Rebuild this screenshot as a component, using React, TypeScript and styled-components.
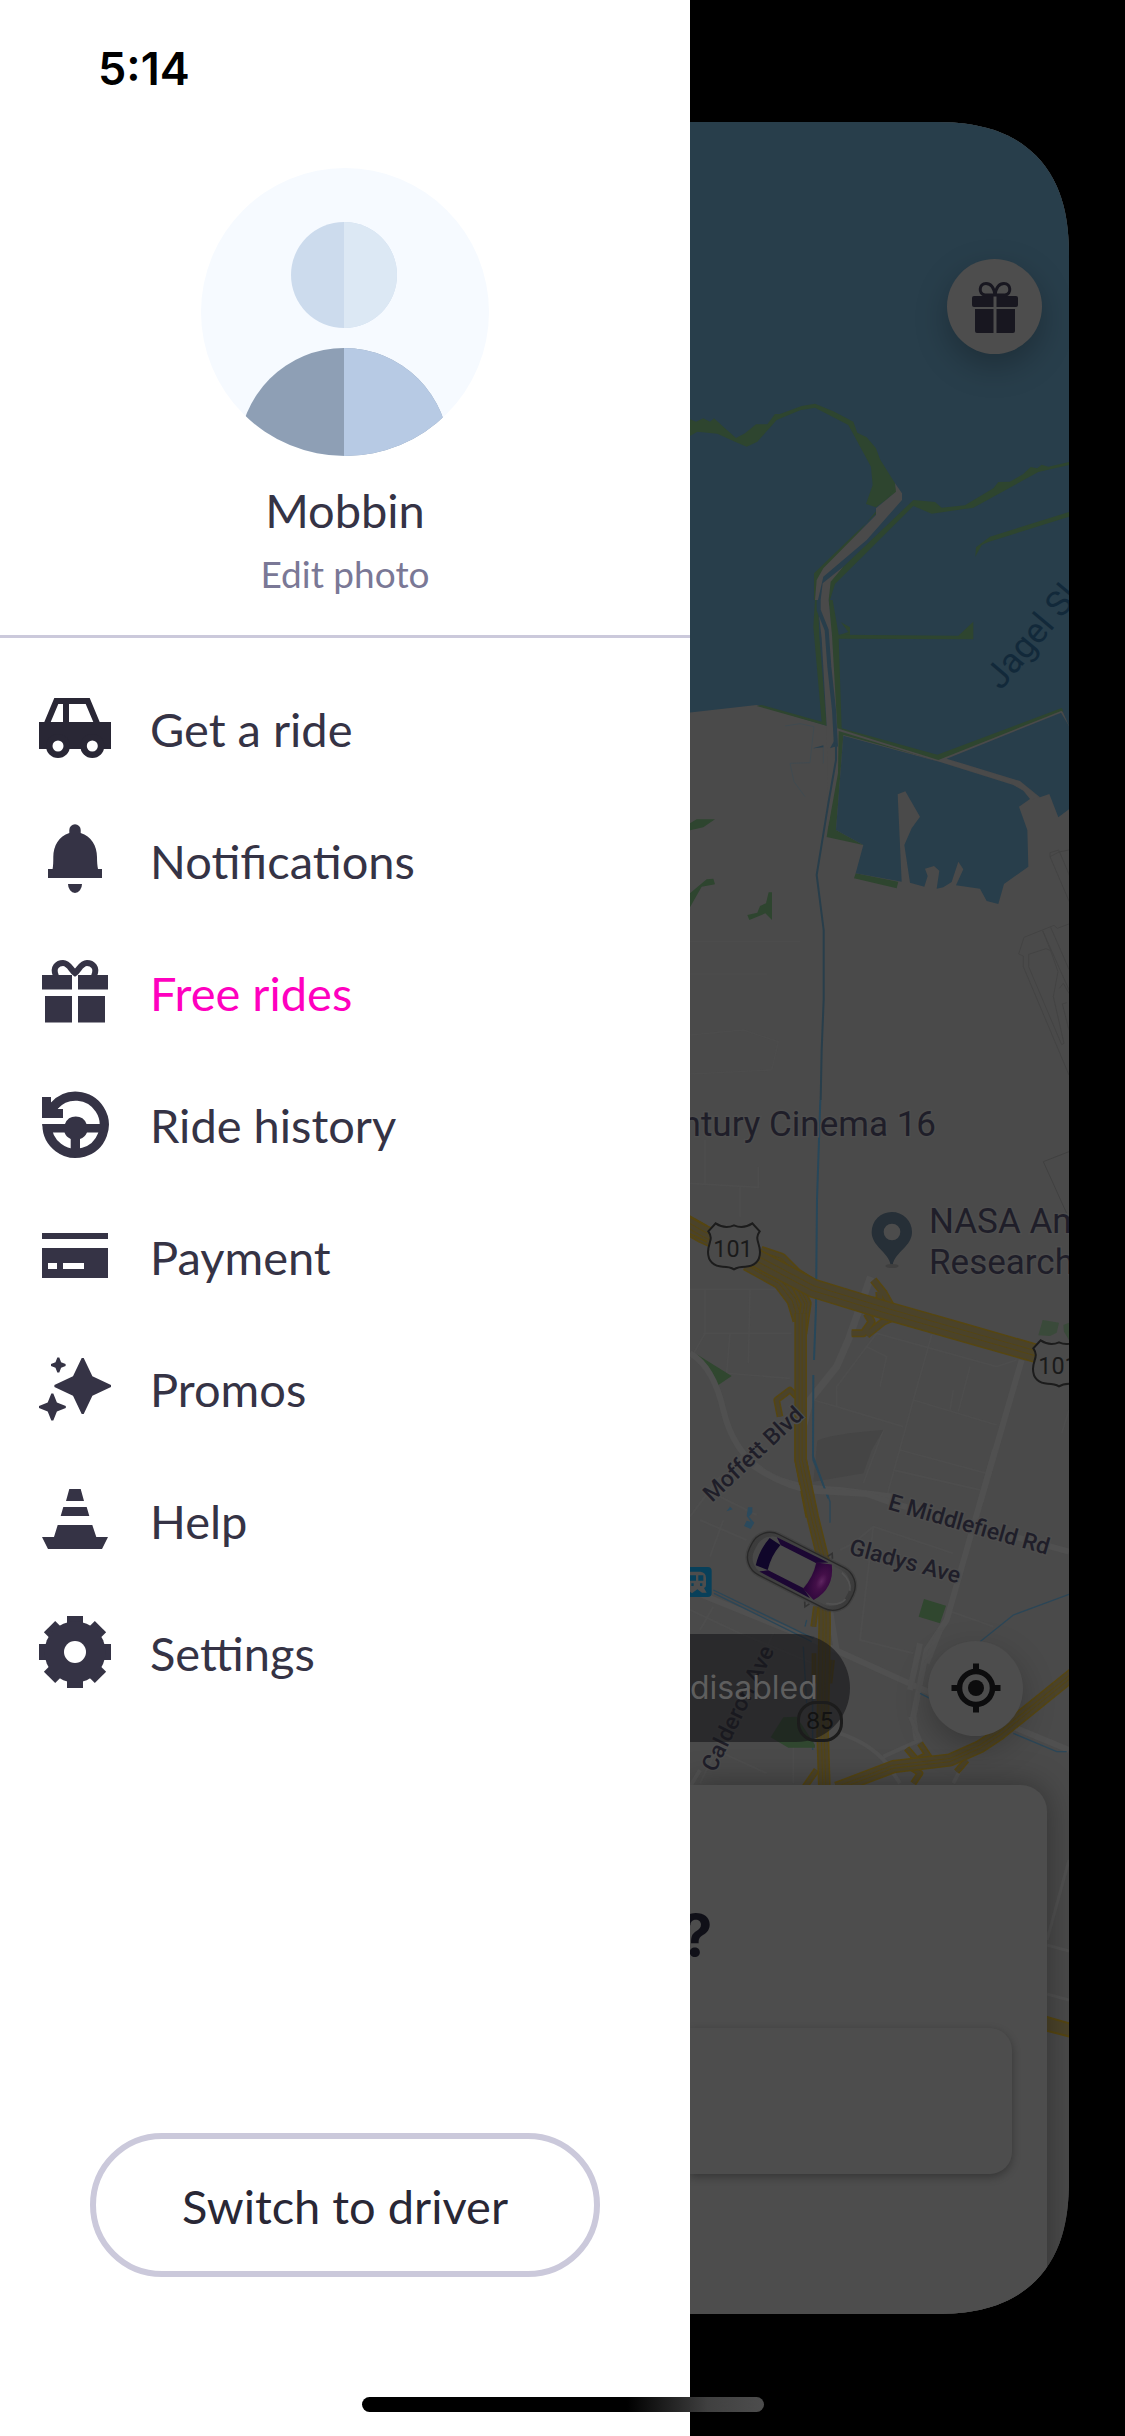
import React from "react";
import styled, { createGlobalStyle } from "styled-components";

const INK = "#353345";
const LINE = "#cbc9db";

const GlobalStyle = createGlobalStyle`
  *, *::before, *::after { box-sizing: border-box; }
  body { margin: 0; background: #000; }
  ul { list-style: none; margin: 0; padding: 0; }
  h1, h2, p { margin: 0; font-weight: 400; }
  button { font: inherit; border: 0; padding: 0; cursor: pointer; }
`;

const Screen = styled.main`
  position: relative;
  display: grid;
  grid-template-columns: minmax(0, 690fr) minmax(0, 435fr);
  min-height: 100vh;
  background: #000;
  font-family: Lato, "Open Sans", sans-serif;
`;

/* ---------- drawer ---------- */

const Drawer = styled.aside`
  display: flex;
  flex-direction: column;
  background: #fff;
  color: ${INK};
`;

const StatusBar = styled.div`
  height: 168px;
  padding: 42px 98px 0;
  font: 600 45px/54px Inter, sans-serif;
  color: #000;
`;

const Profile = styled.header`
  display: flex;
  flex-direction: column;
  align-items: center;
  padding-bottom: 36px;
  border-bottom: 3px solid ${LINE};
`;

const Avatar = styled.svg`
  width: 288px;
  height: 288px;
`;

const UserName = styled.h1`
  margin-top: 24px;
  font-size: 47px;
  line-height: 60px;
`;

const EditPhoto = styled.button`
  margin-top: 8px;
  background: none;
  color: #7a7896;
  font-size: 37px;
  line-height: 51px;
`;

const Menu = styled.nav`
  flex: 1;
  padding: 24px 0;
`;

const MenuLink = styled.a<{ $highlight?: boolean }>`
  display: flex;
  align-items: center;
  gap: 39px;
  height: 132px;
  padding: 0 39px;
  color: ${(p) => (p.$highlight ? "#ff00bf" : INK)};
  font-size: 47px;
  line-height: 60px;
  text-decoration: none;
`;

const MenuLabel = styled.span`
  padding-top: 2px;
`;

const MenuIcon = styled.svg`
  flex: none;
  width: 72px;
  height: 72px;
  fill: ${INK};
`;

const DrawerFooter = styled.footer`
  padding: 0 90px 159px;
`;

const SwitchButton = styled.button`
  width: 100%;
  height: 144px;
  padding-top: 2px;
  border: 6px solid ${LINE};
  border-radius: 72px;
  background: #fff;
  color: #292735;
  font-size: 47px;
  line-height: 60px;
`;

/* ---------- dimmed app behind the drawer ---------- */

const AppPreview = styled.section`
  position: relative;
  display: flex;
  flex-direction: column;
  margin: 122px 56px 122px 0;
  overflow: hidden;
  background: #4a4a4a;
  border-radius: 0 104px 104px 0;
  @supports (corner-shape: superellipse(1.3)) {
    border-radius: 0 136px 136px 0;
    corner-shape: superellipse(1.3);
  }
`;

const MapCanvas = styled.svg`
  position: absolute;
  inset: 0;
  width: 100%;
  height: 100%;
  font-family: Roboto, Inter, sans-serif;
`;

const Overlay = styled.div`
  position: relative;
  flex: 1;
  display: flex;
  flex-direction: column;
`;

const RoundButton = styled.button`
  display: grid;
  place-items: center;
  flex: none;
  width: 95px;
  height: 95px;
  border-radius: 50%;
  background: #4d4d4d;
  box-shadow: 0 12px 32px rgba(0, 0, 0, 0.25);
  svg { width: 52px; height: 52px; }
`;

const TopActions = styled.div`
  flex: 1;
  display: flex;
  justify-content: flex-end;
  align-items: flex-start;
  padding: 137px 27px 0 0;
`;

const MapActions = styled.div`
  display: flex;
  justify-content: space-between;
  align-items: center;
  height: 108px;
  margin-bottom: 43px;
  padding-right: 46px;
`;

const Notice = styled.p`
  height: 108px;
  padding-right: 32px;
  border-radius: 0 54px 54px 0;
  background: rgba(22, 22, 26, 0.62);
  color: #5e5e5e;
  font: 400 32px/108px Inter, sans-serif;
`;

const Sheet = styled.div`
  margin-right: 22px;
  padding: 118px 35px 140px 0;
  border-radius: 0 26px 0 0;
  background: #4d4d4d;
  box-shadow: 0 0 32px rgba(0, 0, 0, 0.35);
`;

const SheetTitle = styled.h2`
  color: #101018;
  font: 700 58px/64px Inter, sans-serif;
  margin: 0 0 61px -10px;
`;

const SearchField = styled.input`
  display: block;
  width: 100%;
  height: 146px;
  border: 0;
  border-radius: 0 22px 22px 0;
  background: #4d4d4d;
  box-shadow: 0 3px 9px rgba(0, 0, 0, 0.3);
`;

const HomeIndicator = styled.div`
  position: absolute;
  left: 50%;
  bottom: 24px;
  width: 402px;
  height: 15px;
  margin-left: -201px;
  border-radius: 8px;
  background: linear-gradient(90deg, #000 66%, #404040 86%, #4d4d4d);
`;

/* ---------- icons ---------- */

const star = (cx: number, cy: number, rx: number, ry: number, t: number) =>
  `M${cx - 1} ${cy - ry}h2L${cx + t} ${cy - t}L${cx + rx} ${cy - 1}v2L${cx + t} ${cy + t}L${cx + 1} ${cy + ry}h-2L${cx - t} ${cy + t}L${cx - rx} ${cy + 1}v-2L${cx - t} ${cy - t}Z`;

const icons = {
  car: (
    <>
      <path fill="#292735" fillRule="evenodd" d="M15.3 6H50.7L60.7 30H72V57H0V30H5.3ZM19.3 12L11.7 30H24V12ZM30 12V30H54.3L46.7 12Z" />
      <circle cx="19" cy="54" r="12" fill="#292735" />
      <circle cx="53.3" cy="54" r="12" fill="#292735" />
      <circle cx="19" cy="54" r="5.5" fill="#fff" />
      <circle cx="53.3" cy="54" r="5.5" fill="#fff" />
    </>
  ),
  bell: <path d="M30.3 6a5.7 5.7 0 0 1 11.4 0V9C52 12 58 22 58 33C58 38 58.4 42 59 45H63V54H9V45H13.6C14.2 42 14.3 38 14.3 33C14.3 22 20 12 30.3 9ZM29 60H43a7 9 0 0 1-14 0Z" />,
  gift: (
    <>
      <path d="M3 19H33V33.5H3ZM39 19H69V33.5H39ZM6 40H33V66.5H6ZM39 40H66V66.5H39Z" />
      <path d="M17 20C13 11 19 7 24 7C30 7 32 14 36 17C40 14 42 7 48 7C53 7 59 11 55 20" fill="none" stroke={INK} strokeWidth="6" />
    </>
  ),
  history: (
    <>
      <path d="M15 18A28.6 28.6 0 1 1 8 36.5" fill="none" stroke={INK} strokeWidth="9.2" />
      <path d="M3 9H12V15L17 12L20 18L18.5 21H24V30H3ZM3 36H26A11.5 11.5 0 0 1 47.5 36H66V44.5H48A12 12 0 0 1 41 51V63H31.7V51A12 12 0 0 1 25.5 44.5H6Z" />
    </>
  ),
  card: <path fillRule="evenodd" d="M3 13H69V19H3ZM3 28H69V58H3ZM9 43V49H18V43ZM24 43V49H45V43Z" />,
  sparkle: (
    <path d={star(43.7, 34, 28.3, 28, 9.7) + star(19.3, 13, 7.3, 7.5, 2.8) + star(13.3, 55, 13.5, 13.5, 4.6)} />
  ),
  cone: <path d="M30.3 5H41.7L45 17H27ZM24.3 23H47.7L50.3 32H21.7ZM18.7 41H53.3L57.3 53H69L63 65H9L3 53H15Z" />,
  gear: (
    <>
      {[0, 45, 90, 135].map((a) => (
        <rect key={a} x="28" y="0" width="16" height="72" transform={`rotate(${a} 36 36)`} />
      ))}
      <circle cx="36" cy="36" r="30.5" />
      <circle cx="36" cy="36" r="11" fill="#fff" />
    </>
  ),
};

const menu: { label: string; icon: keyof typeof icons; highlight?: boolean }[] = [
  { label: "Get a ride", icon: "car" },
  { label: "Notifications", icon: "bell" },
  { label: "Free rides", icon: "gift", highlight: true },
  { label: "Ride history", icon: "history" },
  { label: "Payment", icon: "card" },
  { label: "Promos", icon: "sparkle" },
  { label: "Help", icon: "cone" },
  { label: "Settings", icon: "gear" },
];

/* ---------- map ---------- */

const WATER = "#283e4b";
const PARK = "#2e452f";
const LAND = "#4a4a4a";
const ROAD = "#505050";
const STREAM = "#2b4657";
const GOLD = "#564611";
const GOLD_FILL = "#4b432a";

const Highway = ({ d, w = 34 }: { d: string; w?: number }) => (
  <g fill="none" strokeLinejoin="round">
    <path d={d} stroke={GOLD} strokeWidth={w} />
    <path d={d} stroke={GOLD_FILL} strokeWidth={w - 9} />
    {w > 30 && (
      <>
        <path d={d} stroke={GOLD} strokeWidth={w * 0.3} />
        <path d={d} stroke={GOLD_FILL} strokeWidth={w * 0.3 - 5} />
      </>
    )}
  </g>
);

const UsShield = ({ x, y }: { x: number; y: number }) => (
  <g transform={`translate(${x} ${y})`}>
    <path
      d="M-55 -72Q-28 -54 0 -66Q28 -54 55 -72L77 -48C60 -24 78 -14 78 14C78 42 60 58 34 58Q12 58 0 66Q-12 58 -34 58C-60 58 -78 42 -78 14C-78 -14 -60 -24 -77 -48Z"
      fill="#4a4a4a"
      stroke="#1c1c1c"
      strokeWidth="6"
    />
    <text x="-3" y="30" textAnchor="middle" fontSize="70" fill="#1a1a1a">101</text>
  </g>
);

const Map = () => (
  <MapCanvas viewBox="690 122 379 2192" preserveAspectRatio="xMinYMin slice" role="img" aria-label="Map">
    <defs>
      <linearGradient id="hood" x1="0" x2="1">
        <stop offset="0" stopColor="#3c3c3c" />
        <stop offset="0.7" stopColor="#474747" />
        <stop offset="1" stopColor="#3a3a3a" />
      </linearGradient>
      <radialGradient id="glass" cx="0.62" cy="0.5" r="0.6">
        <stop offset="0" stopColor="#5e2560" />
        <stop offset="0.35" stopColor="#430f48" />
        <stop offset="1" stopColor="#2a0639" />
      </radialGradient>
    </defs>
    <rect x="690" y="122" width="379" height="2192" fill={LAND} />

    {/* bay shore */}
    <g transform="translate(680 100) scale(0.33333)">
      <path fill={WATER} d="M0 0H1200V1510H0Z" />
      <g fill={PARK}>
        <path d="M30 958L48 965L70 955L90 965L102 955L130 980L168 1014L195 1000L228 973H262L285 942H300L365 918L405 911L460 934L520 965L532 998L560 1012L588 1045L600 1078L645 1150L650 1175L588 1222L558 1212L578 1155L573 1100L505 975L405 923L360 931L290 960L232 1025L200 1040L165 1025L112 1001L52 995L30 1008Z" />
        <path d="M450 1500L465 1452L700 1218L755 1241L880 1223L1075 1116L1167 1095V1086L1105 1100L1085 1094L1072 1105L1052 1101L1030 1122L990 1145L955 1146L940 1165L855 1216L785 1223L765 1206L700 1200L490 1400L440 1452V1500Z" />
        <path d="M886 1370L888 1342L930 1310L1167 1236V1250L925 1326L905 1335Z" />
        <path d="M402 1500V1420L500 1325L590 1240L640 1170L420 1440L410 1500Z" />
      </g>
      <path fill={LAND} d="M645 1150L666 1180V1200L560 1320L430 1430L414 1500H405L410 1440L430 1405L588 1245V1225L648 1175ZM422 1500L428 1450L490 1400L452 1445L446 1500Z" />
    </g>
    <g transform="translate(680 600) scale(0.33333)">
      <path fill={WATER} d="M0 0H1200V378H1167L1145 328L775 470L475 385L440 377L230 315L0 341Z" />
      <g fill={PARK}>
        <path d="M405 0H414L418 110L440 377L230 318L245 315L425 365L400 80Z" />
        <path d="M446 0H458L476 104L835 107L880 65V118L476 116L485 385L772 464L1145 324L1150 334L775 482L490 405L468 690L550 735L440 711L472 500L470 385L455 110Z" />
        <path d="M482 66L510 82V104L476 106L505 96ZM30 670L50 658H105L70 682L30 691ZM30 880L80 838L100 836L105 853L65 860L30 922ZM202 945L232 938L240 918L258 910L266 877H276V960L256 940L208 960ZM527 820L655 845L650 865L522 835Z" />
      </g>
      <path fill={LAND} d="M412 0H446L456 105L472 385L488 390L775 480L1145 332L1148 340L800 478L1000 540L1020 543L1078 592L1050 600L1030 570L1000 553L780 486L476 393L474 520L445 680L440 377L425 115Z" />
      <g fill={WATER}>
        <path d="M490 407L780 486L1000 555L1030 572L1050 597L1017 620L1042 690L1045 800L972 852L955 912L920 903L900 866L828 856L850 808L835 785L815 846L790 862L770 866L778 812L762 798L735 806L743 828L733 860L690 848L673 735L695 685L720 650L676 574L653 583L665 845L527 820L550 735L468 690Z" />
        <path d="M800 476L1143 338L1167 378V628L1135 652L1108 582L1080 592L1020 543Z" />
      </g>
      <g fill="none" stroke={WATER} strokeWidth="6">
        <path strokeWidth="12" d="M416 0V30L440 90L448 200L462 330L468 440" />
        <path d="M468 430V480L445 610L410 825L431 990V1200L425 1350L422 1500" />
        <path strokeWidth="3" stroke="#404a50" d="M315 378L360 371L402 380L390 488L330 490L342 545L375 590M400 445L430 438V490" />
      </g>
      <path d="M400 445L430 436V442ZM450 445L464 420V440Z" fill={WATER} />
      <g fill="none" stroke="#434343" strokeWidth="3">
        <path d="M1167 750L1137 756L1110 770L1170 910M1137 752L1170 830M1110 770V758L1137 750M1016 1062L1032 1012L1122 976L1132 985L1167 972M1016 1062L1030 1068V1100L1167 1425M1046 1100V1063L1098 1046L1112 1052L1088 992L1167 1170M1046 1100L1145 1334L1152 1330L1120 1190L1134 1115L1112 1052M1112 982L1167 1108M1167 1290L1147 1212L1160 1208M1138 1165L1150 1150L1167 1180" />
      </g>
      <g fill="none" stroke="#4c4c4c" strokeWidth="4">
        <path d="M30 1024H360M30 1122H260M30 1305L190 1290L295 1325L275 1410L30 1422" />
      </g>
    </g>

    {/* city streets */}
    <g transform="translate(680 1100) scale(0.33333)">
      <g fill="none" stroke="#4d4d4d" strokeWidth="5">
        <path d="M30 250L235 262V200M75 120V250M180 262V350M30 568H320M210 570L205 790M75 570V700L30 780M70 700H335M150 700L140 820L330 835M590 700L950 800L1010 780M590 700L470 860V920L400 900M560 740L620 770L600 860M470 920L670 980M755 705L700 900L950 975M820 870L810 930M870 800L835 935M700 900L620 1190M660 1050L920 1120M610 990L550 1150M1167 930L1145 1000" />
      </g>
      <path d="M412 1022Q450 1002 610 990L575 1050L550 1120L400 1145Z" fill="#454545" />
      <path d="M1088 660L1137 668L1130 698L1110 708L1075 706ZM1150 675L1167 668V720L1152 695Z" fill="#3a4a3a" />
      <path d="M50 763L155 828L112 857Z" fill="#30472f" />
      <path d="M1167 155L1090 185L1160 340" fill="none" stroke="#404040" strokeWidth="3" />
      <g fill="none" stroke={ROAD}>
        <path strokeWidth="22" d="M572 530L505 720L470 800L390 900L365 1000" />
        <path strokeWidth="18" d="M30 760Q100 800 130 930Q160 1060 260 1120Q330 1165 480 1170L640 1190M1025 780L900 1210" />
      </g>
      <path d="M421 0L411 300L408 620L402 780M400 825L399 1070L430 1155L445 1195" fill="none" stroke="#27475a" strokeWidth="6" />
      <Highway w={20} d="M350 890L330 870L290 900L300 950" />
      <Highway w={24} d="M580 540L612 580L645 640M560 602L600 602L598 575" />
      <Highway w={24} d="M560 640L575 665L550 700H515M650 648L610 665L560 705" />
      <Highway w={46} d="M240 460L300 480L345 525L400 560" />
      <Highway w={46} d="M200 490L300 545L342 600L360 660" />
      <Highway w={34} d="M350 555L378 610L365 700" />
      <Highway w={58} d="M0 362L70 402L230 475L400 565L620 632L840 695L1075 762" />
      <path d="M10 340L80 378M10 392L80 425" stroke={GOLD} strokeWidth="5" />
      <Highway w={38} d="M362 640V1080L395 1250" />
      <UsShield x={162} y={442} />
      <UsShield x={1137} y={793} />
      <path d="M635 336A60 60 0 0 1 696 396C696 440 645 455 638 495H632C625 455 575 440 575 396A60 60 0 0 1 635 336Z" fill="#262f37" />
      <circle cx="636" cy="396" r="25" fill="#4c4c4c" />
      <ellipse cx="636" cy="498" rx="20" ry="6" fill="#3f3f3f" />
    </g>

    <g transform="translate(680 1450) scale(0.33333)">
      <g fill="none" stroke="#4d4d4d" strokeWidth="6">
        <path d="M30 200L120 80M100 130L230 195M60 210L200 270M130 210L90 320M30 480L180 550L400 640M100 470L60 540M280 550L60 1000M130 910L260 970M480 300L520 280L580 230L820 310M580 230L540 570L700 610M640 60L900 120M800 480L940 530M340 890V1000" />
      </g>
      <g fill="none" stroke={ROAD}>
        <path strokeWidth="18" d="M180 20Q300 110 400 122L560 132L640 160L1167 305M945 0L800 510L740 600L700 800L710 870" />
        <path strokeWidth="18" d="M30 420L400 570L710 710L1167 900M720 580L690 720M740 640L780 540M450 480L470 600" />
        <path strokeWidth="12" d="M30 1010L60 960M480 850Q570 880 620 940L660 1000M610 920L720 870L690 800M820 1000L840 960" />
      </g>
      <g fill="none" stroke={STREAM} strokeWidth="4">
        <path d="M399 0V30L430 105M443 135L450 155V218M100 420L400 565M102 430L395 575M380 510L375 530M900 575L1000 495L1167 433M720 730L750 745M1000 850L1130 905H1160M370 590L380 760M398 640V900" />
      </g>
      <path d="M140 184L150 170L158 178ZM204 172H217V188L207 200L223 218L212 237L192 228L200 212L212 215L200 198Z" fill="#2b4a5d" />
      <path d="M732 447L798 467L780 520L716 500ZM310 802L350 800L405 885V893H325L272 862Z" fill="#30472f" />
      <Highway w={18} d="M408 470L400 530" />
      <Highway w={14} d="M402 610V700M458 630L450 700" />
      <Highway w={20} d="M375 1010L410 960" />
      <Highway w={38} d="M362 -100V30L398 200L430 330L434 520L428 850L433 1010" />
      <Highway w={20} d="M680 895L710 930L740 915M720 880L750 925" />
      <Highway w={20} d="M700 1000L720 970L690 950M830 965L860 930" />
      <Highway w={40} d="M470 1015L640 950L810 930L900 890L960 850L1180 672" />
      <g transform="translate(364 364) rotate(27)">
        <rect x="-176" y="-74" width="352" height="148" rx="66" fill="#3a3a3a" opacity="0.5" />
        <path d="M50 -76L58 -90L66 -76M50 76L58 90L66 76" fill="none" stroke="#333" strokeWidth="5" />
        <rect x="-170" y="-68" width="340" height="136" rx="60" fill="url(#hood)" stroke="#282828" strokeWidth="4" />
        <rect x="-154" y="-58" width="308" height="116" rx="50" fill="#484848" />
        <path d="M-130 -46Q-142 0 -130 46L-92 42Q-102 0 -92 -42Z" fill="#10062a" />
        <path d="M-112 -58L60 -60L24 -40H-88ZM-112 58L60 60L24 40H-88Z" fill="#1c0733" />
        <path d="M-90 -42H26Q38 0 26 42H-90Q-100 0 -90 -42Z" fill="#4b4b4b" />
        <path d="M28 -44L72 -60Q112 0 72 60L28 44Q40 0 28 -44Z" fill="url(#glass)" />
        <path d="M110 -52Q150 -40 156 -14M110 52Q150 40 156 14" fill="none" stroke="#525252" strokeWidth="5" />
      </g>
      <rect x="-10" y="351" width="105" height="90" rx="12" fill="#08405a" />
      <path fillRule="evenodd" fill="#4d4d4d" d="M20 365H62Q78 367 78 384V405Q78 412 72 414L80 428H66L52 418L36 430L20 418ZM30 376V392H48V376ZM55 376V392H70V376ZM34 400h7v8h-7ZM60 400h7v8h-7Z" />
    </g>

    {/* slice beside the sheet */}
    <g fill="none" stroke={ROAD} strokeWidth="3">
      <path d="M1047 1940L1069 1860M1047 1945L1069 1951M1047 1994L1069 2000" />
    </g>
    <path d="M1040 2015L1075 2025V2038L1040 2029Z" fill={GOLD_FILL} stroke={GOLD} strokeWidth="2" />

    <g fill="#1f1e29" stroke="#4d4d4d" strokeWidth="3" paintOrder="stroke">
      <text x="936" y="1136" textAnchor="end" fontSize="35">Century Cinema 16</text>
      <text x="929" y="1233" fontSize="35">NASA Ames</text>
      <text x="929" y="1274" fontSize="35">Research Center</text>
      <g fontSize="23" fontWeight="500">
        <text transform="translate(712 1503) rotate(-43)">Moffett Blvd</text>
        <text transform="translate(887 1509) rotate(16)">E Middlefield Rd</text>
        <text transform="translate(848 1554) rotate(15)">Gladys Ave</text>
        <text transform="translate(715 1773) rotate(-64)">Calderon Ave</text>
      </g>
    </g>
    <text transform="translate(1001 691) rotate(-50)" fontSize="35" fill="#12293a">Jagel Slough</text>
  </MapCanvas>
);

const Route85 = styled.span`
  position: absolute;
  left: 107px;
  bottom: 572px;
  width: 46px;
  height: 41px;
  border: 3px solid #1c1c1c;
  border-radius: 19px;
  color: #121212;
  font: 400 23px/35px Inter, sans-serif;
  text-align: center;
`;

export default function App() {
  return (
    <>
      <GlobalStyle />
      <Screen>
        <Drawer>
          <StatusBar>5:14</StatusBar>
          <Profile>
            <Avatar viewBox="0 0 288 288" role="img" aria-label="Profile photo">
              <defs>
                <clipPath id="disc"><circle cx="144" cy="144" r="144" /></clipPath>
                <clipPath id="right"><rect x="143" y="0" width="145" height="288" /></clipPath>
              </defs>
              <g clipPath="url(#disc)">
                <rect width="288" height="288" fill="#f6faff" />
                <circle cx="143" cy="107" r="53" fill="#ccdbed" />
                <circle cx="143" cy="285" r="105" fill="#8e9fb5" />
                <g clipPath="url(#right)">
                  <circle cx="143" cy="107" r="53" fill="#dce8f4" />
                  <circle cx="143" cy="285" r="105" fill="#b7cae4" />
                </g>
              </g>
            </Avatar>
            <UserName>Mobbin</UserName>
            <EditPhoto type="button">Edit photo</EditPhoto>
          </Profile>
          <Menu>
            <ul>
              {menu.map((m) => (
                <li key={m.label}>
                  <MenuLink href="#" $highlight={m.highlight}>
                    <MenuIcon viewBox="0 0 72 72" aria-hidden="true">{icons[m.icon]}</MenuIcon>
                    <MenuLabel>{m.label}</MenuLabel>
                  </MenuLink>
                </li>
              ))}
            </ul>
          </Menu>
          <DrawerFooter>
            <SwitchButton type="button">Switch to driver</SwitchButton>
          </DrawerFooter>
        </Drawer>

        <AppPreview>
          <Map />
          <Overlay>
            <TopActions>
              <RoundButton type="button" aria-label="Gifts">
                <svg viewBox="0 0 52 52" fill="#181720">
                  <path d="M5 15H24.5V26H5A2 2 0 0 1 3 24V17A2 2 0 0 1 5 15ZM27.5 15H47A2 2 0 0 1 49 17V24A2 2 0 0 1 47 26H27.5ZM6 28H24.5V52H8A2 2 0 0 1 6 50ZM27.5 28H46V50A2 2 0 0 1 44 52H27.5Z" />
                  <path d="M26 14C25 7 22 2.5 17 2.5C10 2.5 9 13 16 14H36C43 13 42 2.5 35 2.5C30 2.5 27 7 26 14Z" fill="none" stroke="#181720" strokeWidth="3" />
                </svg>
              </RoundButton>
            </TopActions>
            <MapActions>
              <Notice>disabled</Notice>
              <RoundButton type="button" aria-label="Center on my location">
                <svg viewBox="0 0 52 52" fill="none" stroke="#0c0c0d">
                  <circle cx="26" cy="26" r="16.5" strokeWidth="5.5" />
                  <circle cx="26" cy="26" r="8" fill="#0c0c0d" stroke="none" />
                  <path d="M26 1.5V9M26 43V50.5M1.5 26H9M43 26H50.5" strokeWidth="6" />
                </svg>
              </RoundButton>
            </MapActions>
            <Sheet>
              <SheetTitle>?</SheetTitle>
              <SearchField type="text" aria-label="Destination" />
            </Sheet>
            <Route85>85</Route85>
          </Overlay>
        </AppPreview>
        <HomeIndicator />
      </Screen>
    </>
  );
}
